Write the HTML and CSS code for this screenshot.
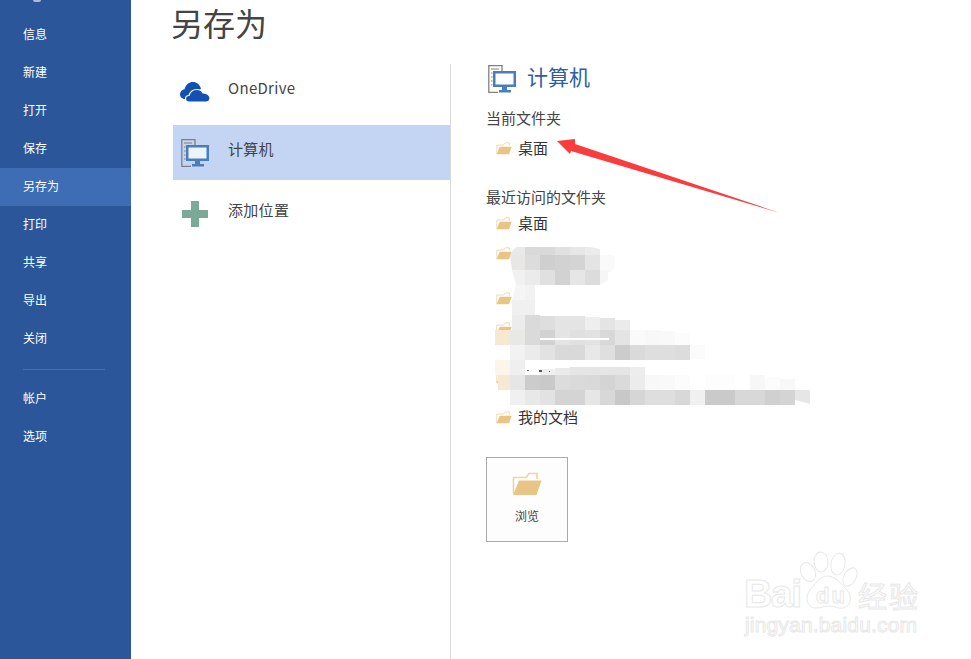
FILE: index.html
```html
<!DOCTYPE html>
<html lang="zh-CN">
<head>
  <meta charset="UTF-8">
  <title>另存为</title>
  <link rel="stylesheet" href="styles.css">
</head>
<body>

  <!-- shared icons -->
  <svg class="defs" width="0" height="0">
    <symbol id="folder" viewBox="0 0 30 24">
      <path d="M1.5 22V5.5H14L17 1.5H25V7" fill="#fff" stroke="#eed3a4" stroke-width="1.6"/>
      <path d="M1 23L7 8.5H29.5L24.5 23Z" fill="#e9c585"/>
    </symbol>
    <symbol id="computer" viewBox="0 0 28 28">
      <path d="M14 6V.7H.8V27.3H10" fill="none" stroke="#808080" stroke-width="1.300"/>
      <path d="M3 4H11M3 8H4.500M3 12H4.500M3 16H4.500M3 20H4.500" stroke="#808080" stroke-width="1"/>
      <rect x="6.250" y="7.250" width="20.500" height="13.500" fill="#fff" fill-opacity=".7" stroke="#4a7ebb" stroke-width="2.500"/>
      <path d="M14 22H19V25H23V27.500H11V25H14Z" fill="#4a7ebb"/>
    </symbol>
  </svg>

  <aside class="sidebar">
    <div class="back-arc"></div>
    <div class="nav-item">信息</div>
    <div class="nav-item">新建</div>
    <div class="nav-item">打开</div>
    <div class="nav-item">保存</div>
    <div class="nav-item active">另存为</div>
    <div class="nav-item">打印</div>
    <div class="nav-item">共享</div>
    <div class="nav-item">导出</div>
    <div class="nav-item">关闭</div>
    <div class="nav-line"></div>
    <div class="nav-item lower">帐户</div>
    <div class="nav-item lower">选项</div>
  </aside>

  <main class="content">
    <h1 class="page-title">另存为</h1>
    <div class="panes">
      <div class="places">
        <div class="place">
          <span class="place-icon">
            <svg width="30" height="20" viewBox="0 0 30 20">
              <path d="M5 17C1.500 17 0 14.500 0 12.500C0 9.500 2 7.500 4.500 7.200C6 2.500 9 0 13 0C17 0 19.500 2.500 21 6.500L12 16Z" fill="#1450b0"/>
              <path d="M9 20C6.500 20 5.500 18.500 5.500 16.800C5.500 15 7 13.500 9 13.500C10 10 13 7.500 17 7.500C20 7.500 22 9 23 11C27 11 30 13.500 30 16C30 18.500 28 20 26 20Z" fill="#1450b0" stroke="#fff" stroke-width="1.200"/>
            </svg>
          </span>
          <span class="place-name">OneDrive</span>
        </div>
        <div class="place selected">
          <span class="place-icon"><svg width="28" height="28"><use href="#computer"/></svg></span>
          <span class="place-name">计算机</span>
        </div>
        <div class="place">
          <span class="place-icon">
            <svg width="26" height="26" viewBox="0 0 26 26">
              <path d="M9 0H17V9H26V17H17V26H9V17H0V9H9Z" fill="#7aaa97"/>
            </svg>
          </span>
          <span class="place-name">添加位置</span>
        </div>
      </div>

      <div class="detail">
        <div class="detail-head">
          <svg width="28" height="28"><use href="#computer"/></svg>
          <span class="detail-name">计算机</span>
        </div>
        <div class="section-title">当前文件夹</div>
        <div class="folder first"><svg class="folder-icon"><use href="#folder"/></svg>桌面</div>
        <div class="section-title recent">最近访问的文件夹</div>
        <div class="folder"><svg class="folder-icon"><use href="#folder"/></svg>桌面</div>
        <div class="folder"><svg class="folder-icon"><use href="#folder"/></svg></div>
        <div class="folder gap-m"><svg class="folder-icon"><use href="#folder"/></svg></div>
        <div class="folder"><svg class="folder-icon"><use href="#folder"/></svg></div>
        <div class="folder gap-l"><svg class="folder-icon"><use href="#folder"/></svg></div>
        <div class="folder gap-s"><svg class="folder-icon"><use href="#folder"/></svg>我的文档</div>
        <div class="browse">
          <svg class="browse-icon"><use href="#folder"/></svg>
          <span>浏览</span>
        </div>
      </div>
    </div>
  </main>

  <!-- things painted on top of the screenshot: mosaic, arrow, watermark -->
  <svg class="overlay" width="971" height="659" viewBox="0 0 971 659">
    <defs>
      <clipPath id="blurTop"><path d="M510 256L513 250L517 247L590 247L610 251L615 257V268L608 273V280L600 285H535V330H512V300L516 285L512 270Z"/></clipPath>
    </defs>

    <g clip-path="url(#blurTop)">
      <rect x="510" y="247" width="15" height="8" fill="#e9e9e9"/>
      <rect x="525" y="247" width="30" height="8" fill="#d9d9d9"/>
      <rect x="555" y="247" width="15" height="8" fill="#e0e0e0"/>
      <rect x="570" y="247" width="15" height="8" fill="#e6e6e6"/>
      <rect x="585" y="247" width="15" height="8" fill="#ececec"/>
      <rect x="510" y="255" width="15" height="15" fill="#e8e7e5"/>
      <rect x="525" y="255" width="15" height="15" fill="#dcdcdc"/>
      <rect x="540" y="255" width="15" height="15" fill="#cfcfcf"/>
      <rect x="555" y="255" width="15" height="15" fill="#d2d2d2"/>
      <rect x="570" y="255" width="15" height="15" fill="#d4d4d4"/>
      <rect x="585" y="255" width="15" height="15" fill="#e4e4e4"/>
      <rect x="600" y="255" width="15" height="15" fill="#fafafa"/>
      <rect x="510" y="270" width="15" height="15" fill="#f1f1f1"/>
      <rect x="525" y="270" width="15" height="15" fill="#ebebeb"/>
      <rect x="540" y="270" width="15" height="15" fill="#e0e0e0"/>
      <rect x="555" y="270" width="15" height="15" fill="#d2d2d2"/>
      <rect x="570" y="270" width="15" height="15" fill="#e6e6e6"/>
      <rect x="585" y="270" width="15" height="15" fill="#dcdcdc"/>
      <rect x="600" y="270" width="15" height="15" fill="#f6f6f6"/>
      <rect x="510" y="285" width="15" height="15" fill="#f5f5f5"/>
      <rect x="525" y="285" width="10" height="15" fill="#f2f2f2"/>
      <rect x="510" y="300" width="25" height="15" fill="#f0f0f0"/>
      <rect x="510" y="315" width="15" height="15" fill="#ececec"/>
      <rect x="525" y="315" width="10" height="15" fill="#dadada"/>
    </g>

    <rect x="535" y="315" width="5" height="15" fill="#dadada"/>
    <rect x="540" y="316" width="15" height="14" fill="#dedede"/>
    <rect x="555" y="316" width="30" height="14" fill="#e4e4e4"/>
    <rect x="585" y="317" width="15" height="13" fill="#eeeeee"/>
    <rect x="600" y="318" width="15" height="12" fill="#e4e4e4"/>
    <rect x="615" y="320" width="15" height="10" fill="#ebebeb"/>

    <rect x="495" y="330" width="15" height="15" fill="#f7e8d2"/>
    <rect x="510" y="330" width="15" height="15" fill="#e8e8e6"/>
    <rect x="525" y="330" width="15" height="15" fill="#dadada"/>
    <rect x="540" y="330" width="15" height="15" fill="#d2d2d2"/>
    <rect x="555" y="330" width="15" height="15" fill="#e4e4e4"/>
    <rect x="570" y="330" width="15" height="15" fill="#e0e0e0"/>
    <rect x="585" y="330" width="15" height="15" fill="#e2e2e2"/>
    <rect x="600" y="330" width="15" height="15" fill="#d8d8d8"/>
    <rect x="615" y="330" width="15" height="15" fill="#e4e4e4"/>
    <rect x="630" y="330" width="15" height="15" fill="#fafafa"/>
    <rect x="645" y="330" width="15" height="15" fill="#f8f8f8"/>
    <rect x="660" y="331" width="15" height="14" fill="#f9f9f9"/>
    <rect x="675" y="333" width="15" height="12" fill="#fcfcfc"/>
    <rect x="540" y="338" width="69" height="2" fill="#ffffff"/>

    <rect x="495" y="345" width="15" height="15" fill="#ffffff"/>
    <rect x="510" y="345" width="15" height="15" fill="#f2f2f2"/>
    <rect x="525" y="345" width="15" height="15" fill="#ebebeb"/>
    <rect x="540" y="345" width="15" height="15" fill="#e2e2e2"/>
    <rect x="555" y="345" width="30" height="15" fill="#d9d9d9"/>
    <rect x="585" y="345" width="15" height="15" fill="#e8e8e8"/>
    <rect x="600" y="345" width="15" height="15" fill="#dfdfdf"/>
    <rect x="615" y="345" width="15" height="15" fill="#cccccc"/>
    <rect x="630" y="345" width="15" height="15" fill="#dadada"/>
    <rect x="645" y="345" width="30" height="15" fill="#dedede"/>
    <rect x="675" y="345" width="15" height="15" fill="#dcdcdc"/>
    <rect x="690" y="345" width="15" height="14" fill="#fbfbfb"/>

    <rect x="495" y="360" width="15" height="15" fill="#fdf5ea"/>
    <rect x="510" y="360" width="15" height="15" fill="#efefef"/>
    <rect x="540" y="369" width="15" height="6" fill="#efefef"/>
    <rect x="555" y="368" width="15" height="7" fill="#eaeaea"/>
    <rect x="570" y="367" width="60" height="8" fill="#e5e5e5"/>
    <rect x="630" y="367" width="15" height="8" fill="#ededed"/>
    <rect x="527" y="370" width="2" height="1" fill="#777777"/>
    <rect x="539" y="370" width="3" height="2" fill="#555555"/>
    <rect x="549" y="371" width="1" height="1" fill="#555555"/>

    <rect x="498" y="375" width="12" height="15" fill="#f7e8d2"/>
    <rect x="510" y="375" width="15" height="15" fill="#e6e6e6"/>
    <rect x="525" y="375" width="15" height="15" fill="#cccccc"/>
    <rect x="540" y="375" width="15" height="15" fill="#c9c9c9"/>
    <rect x="555" y="375" width="15" height="15" fill="#dcdcdc"/>
    <rect x="570" y="375" width="15" height="15" fill="#dadada"/>
    <rect x="585" y="375" width="15" height="15" fill="#d9d9d9"/>
    <rect x="600" y="375" width="15" height="15" fill="#d4d4d4"/>
    <rect x="615" y="375" width="15" height="15" fill="#dadada"/>
    <rect x="630" y="375" width="15" height="15" fill="#ececec"/>
    <rect x="645" y="375" width="15" height="15" fill="#f8f8f8"/>
    <rect x="660" y="375" width="15" height="15" fill="#f9f9f9"/>
    <rect x="675" y="375" width="15" height="15" fill="#fcfcfc"/>
    <rect x="705" y="375" width="30" height="15" fill="#fdfdfd"/>
    <rect x="750" y="375" width="15" height="15" fill="#f7f7f7"/>
    <rect x="765" y="377" width="15" height="13" fill="#fcfcfc"/>
    <rect x="780" y="379" width="15" height="11" fill="#f8f8f8"/>

    <rect x="510" y="390" width="15" height="15" fill="#f0f0f0"/>
    <rect x="525" y="390" width="15" height="15" fill="#e8e8e8"/>
    <rect x="540" y="390" width="15" height="15" fill="#e2e2e2"/>
    <rect x="555" y="390" width="30" height="15" fill="#d4d4d4"/>
    <rect x="585" y="390" width="15" height="15" fill="#e6e6e6"/>
    <rect x="600" y="390" width="15" height="15" fill="#d8d8d8"/>
    <rect x="615" y="390" width="15" height="15" fill="#c8c8c8"/>
    <rect x="630" y="390" width="15" height="15" fill="#d6d6d6"/>
    <rect x="645" y="390" width="30" height="15" fill="#dedede"/>
    <rect x="675" y="390" width="15" height="15" fill="#d8d8d8"/>
    <rect x="690" y="390" width="15" height="15" fill="#f0f0f0"/>
    <rect x="705" y="390" width="30" height="15" fill="#cacaca"/>
    <rect x="735" y="390" width="30" height="15" fill="#d8d8d8"/>
    <rect x="765" y="390" width="15" height="15" fill="#d0d0d0"/>
    <rect x="780" y="390" width="15" height="15" fill="#d4d4d4"/>
    <path d="M795 390H810V404L795 400Z" fill="#e6e6e6"/>

    <path class="arrow" d="M557 141L575 139L575 144L780 213L571 151L570 154Z"/>

    <g class="mark">
      <text class="mark-big" x="744" y="607" textLength="58">Bai</text>
      <ellipse cx="808" cy="572" rx="7" ry="10" transform="rotate(-25 808 572)"/>
      <ellipse cx="821" cy="562" rx="7" ry="10" transform="rotate(-5 821 562)"/>
      <ellipse cx="838" cy="564" rx="7" ry="11" transform="rotate(10 838 564)"/>
      <ellipse cx="850" cy="577" rx="6" ry="10" transform="rotate(30 850 577)"/>
      <path d="M827 576C819 576 815 585 810 590C805 596 806 608 816 608C821 608 824 606 829 606C835 606 838 609 843 608C852 606 852 596 847 590C842 585 836 576 827 576Z"/>
      <text class="mark-du" x="816" y="603" textLength="29">du</text>
      <text class="mark-cn" x="858" y="608" textLength="60">经验</text>
      <text class="mark-url" x="745" y="632" textLength="172">jingyan.baidu.com</text>
    </g>
  </svg>

</body>
</html>
```

FILE: styles.css
```css
* { box-sizing: border-box; }
html, body {
  margin: 0;
  padding: 0;
  height: 100%;
}
body {
  position: relative;
  display: flex;
  width: 971px;
  height: 659px;
  overflow: hidden;
  background: #fff;
  color: #444;
  font-family: "Noto Sans CJK SC", "Noto Sans", sans-serif;
}
.defs {
  position: absolute;
}

/* left blue strip */
.sidebar {
  width: 131px;
  flex-shrink: 0;
  background: #2b579a;
  color: #fff;
  font-size: 12px;
}
.back-arc {
  width: 8px;
  height: 2px;
  margin: 0 0 14px 33px;
  background: #a9bcd8;
  border-radius: 0 0 4px 4px;
}
.nav-item {
  height: 38px;
  line-height: 36px;
  padding-left: 23px;
}
.nav-item.lower {
  line-height: 38px;
}
.nav-item.active {
  background: #3e6db5;
}
.nav-line {
  height: 1px;
  margin: 11px 26px 9px 23px;
  background: #4a72ad;
}

/* main area */
.content {
  flex: 1;
  display: flex;
  flex-direction: column;
}
.page-title {
  height: 64px;
  margin: 0 0 0 40px;
  font-size: 32px;
  font-weight: 400;
  line-height: 44px;
  color: #444;
}
.panes {
  flex: 1;
  display: flex;
}

.places {
  width: 278px;
  margin-left: 42px;
  display: flex;
  flex-direction: column;
  gap: 6px;
  border-right: 1px solid #d9d9d9;
}
.place {
  display: flex;
  align-items: center;
  height: 55px;
  width: 277px;
  font-size: 15px;
}
.place.selected {
  background: #c3d5f2;
}
.place-icon {
  width: 55px;
  display: flex;
  justify-content: center;
  padding-right: 11px;
}
.place-icon svg {
  display: block;
}
.place-name {
  padding-bottom: 9px;
  letter-spacing: 0.3px;
}

.detail {
  flex: 1;
  padding-left: 35px;
  display: flex;
  flex-direction: column;
  align-items: flex-start;
}
.detail-head {
  display: flex;
  align-items: center;
  gap: 11px;
  height: 30px;
  margin-left: 2px;
  font-size: 21px;
  color: #2f5f9f;
}
.detail-name {
  padding-bottom: 7px;
}
.section-title {
  height: 24px;
  margin-top: 12px;
  line-height: 24px;
  font-size: 15px;
  color: #444;
}
.section-title.recent {
  margin-top: 21px;
}
.folder {
  display: flex;
  align-items: center;
  gap: 6px;
  height: 30px;
  padding-left: 10px;
  padding-bottom: 3px;
  font-size: 15px;
  color: #333;
}
.folder.first { margin-top: 4px; }
.folder.gap-s { margin-top: 10px; }
.folder.gap-m { margin-top: 15px; }
.folder.gap-l { margin-top: 19px; }
.folder-icon {
  width: 16px;
  height: 13px;
  margin-top: 2px;
}
.browse {
  width: 82px;
  height: 85px;
  margin-top: 24px;
  padding-top: 14px;
  display: flex;
  flex-direction: column;
  align-items: center;
  gap: 11px;
  background: #fdfdfd;
  border: 1px solid #aaa;
  font-size: 12px;
  color: #444;
}
.browse-icon {
  width: 30px;
  height: 24px;
}

/* painted on top */
.overlay {
  position: absolute;
  top: 0;
  left: 0;
  pointer-events: none;
}
.arrow {
  fill: #fb3c3c;
}
.mark {
  fill: #fff;
  stroke: #e8e8e8;
  stroke-width: 1;
}
.mark-big {
  font-family: "Liberation Sans", sans-serif;
  font-size: 39px;
  font-weight: 700;
}
.mark-du {
  font-family: "Liberation Sans", sans-serif;
  font-size: 22px;
  font-weight: 700;
}
.mark-cn {
  font-size: 29px;
}
.mark-url {
  font-family: "Liberation Sans", sans-serif;
  font-size: 21px;
}
```
